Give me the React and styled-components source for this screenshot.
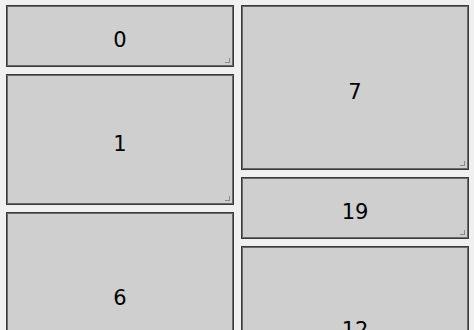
import React from "react";
import styled, { createGlobalStyle } from "styled-components";

const Global = createGlobalStyle`
  html, body { margin: 0; padding: 0; background: #f0f0f0; }
  body { font-family: "DejaVu Sans", Verdana, sans-serif; }
`;

const Board = styled.div`
  display: flex;
  gap: 7px;
  padding: 5px 5px 0 6px;
  height: 330px;
  box-sizing: border-box;
  overflow: hidden;
`;

const Column = styled.div`
  flex: 1;
  display: flex;
  flex-direction: column;
  gap: 7px;
  min-width: 0;
`;

const Tile = styled.div`
  position: relative;
  box-sizing: border-box;
  height: ${(p) => p.$h}px;
  flex-shrink: 0;
  background: #cfcfcf;
  border: 1px solid #3a3a3a;
  box-shadow: inset 0 0 0 1px #6a6a6a;
  display: flex;
  align-items: center;
  justify-content: center;
  padding-top: 8px;
  font-size: 21px;
  color: #000;
  overflow: hidden;

  &::after {
    content: "";
    position: absolute;
    right: 3px;
    bottom: 3px;
    width: 4px;
    height: 4px;
    border-right: 1px solid #8a8a8a;
    border-bottom: 1px solid #8a8a8a;
  }
`;

const left = [
  { n: 0, h: 62 },
  { n: 1, h: 131 },
  { n: 6, h: 164 },
];
const right = [
  { n: 7, h: 165 },
  { n: 19, h: 62 },
  { n: 12, h: 160 },
];

export default function App() {
  return (
    <>
      <Global />
      <Board>
        <Column>
          {left.map((t) => (
            <Tile key={t.n} $h={t.h}>{t.n}</Tile>
          ))}
        </Column>
        <Column>
          {right.map((t) => (
            <Tile key={t.n} $h={t.h}>{t.n}</Tile>
          ))}
        </Column>
      </Board>
    </>
  );
}
